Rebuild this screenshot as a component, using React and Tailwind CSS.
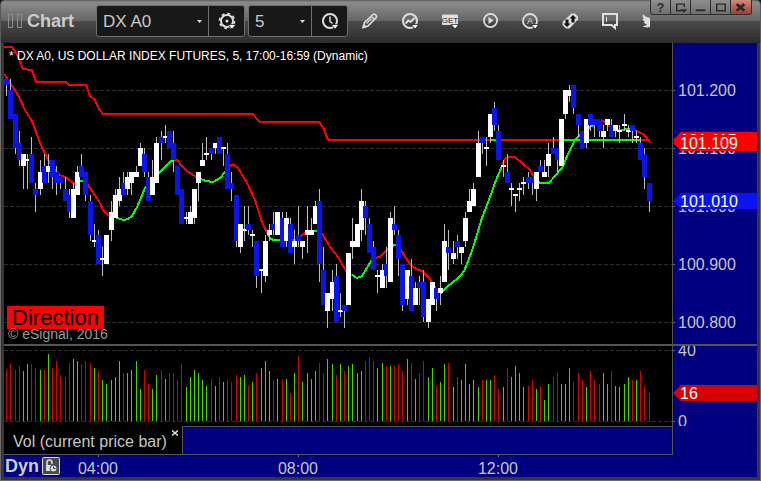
import { FaTwitter } from "react-icons/fa";

// one row per 5 minute bar: open, high, low, close in ticks over 100.800
const bars = [
  [42, 42, 39, 41], [40, 42, 35, 35], [36, 36, 29, 30], [31, 33, 27, 28], [27, 29, 23, 29],
  [28, 29, 23, 28], [29, 32, 24, 24], [23, 24, 19, 22], [23, 28, 22, 26], [27, 29, 24, 24],
  [26, 29, 24, 27], [28, 28, 23, 25], [26, 27, 22, 24], [25, 25, 23, 24], [23, 25, 21, 21],
  [22, 23, 18, 19], [18, 24, 18, 23], [22, 27, 22, 26], [27, 29, 25, 25], [26, 26, 21, 22],
  [21, 22, 14, 15], [14, 17, 13, 14], [15, 16, 10, 10], [11, 13, 8, 11], [10, 15, 10, 15],
  [16, 21, 14, 19], [18, 23, 18, 22], [21, 25, 20, 23], [24, 26, 22, 22], [23, 26, 22, 25],
  [24, 26, 22, 26], [25, 27, 25, 26], [27, 31, 27, 30], [29, 30, 25, 26], [25, 26, 21, 21],
  [22, 28, 22, 25], [24, 32, 24, 31], [32, 33, 28, 31], [32, 34, 31, 32], [33, 33, 30, 30],
  [31, 33, 26, 28], [27, 27, 22, 22], [23, 23, 17, 17], [18, 19, 17, 18], [17, 20, 17, 19],
  [18, 23, 17, 23], [24, 26, 21, 26], [27, 31, 27, 28], [29, 32, 28, 29], [30, 30, 28, 29],
  [30, 31, 29, 31], [32, 32, 29, 29], [30, 30, 27, 30], [29, 31, 23, 23], [24, 26, 21, 23],
  [22, 22, 13, 14], [13, 17, 12, 17], [16, 20, 14, 16], [17, 20, 15, 16], [15, 16, 13, 15],
  [14, 14, 6, 8], [9, 9, 5, 9], [8, 15, 7, 14], [15, 17, 14, 16], [17, 19, 15, 16],
  [15, 19, 15, 19], [18, 19, 13, 13], [14, 19, 13, 18], [17, 18, 12, 12], [13, 16, 10, 14],
  [15, 20, 13, 14], [13, 14, 11, 14], [15, 20, 12, 16], [15, 18, 15, 16], [17, 21, 17, 20],
  [21, 23, 7, 10], [9, 13, 3, 3], [2, 5, -1, 5], [4, 9, 2, 7], [8, 10, 0, 0],
  [2, 5, 1, 2], [3, 3, -1, 2], [3, 12, 3, 12], [13, 18, 11, 14], [13, 17, 13, 17],
  [16, 23, 14, 21], [20, 21, 15, 18], [17, 18, 12, 12], [13, 14, 9, 9], [8, 9, 5, 8],
  [6, 10, 6, 9], [10, 13, 6, 8], [7, 19, 7, 18], [17, 20, 15, 16], [15, 16, 8, 11],
  [10, 10, 2, 3], [4, 9, 3, 9], [8, 11, 2, 2], [3, 7, 3, 6], [7, 8, 3, 6],
  [7, 9, 0, 1], [0, 4, -1, 4], [3, 7, 3, 7], [6, 6, 2, 4], [5, 8, 3, 6],
  [7, 17, 7, 14], [13, 16, 9, 12], [11, 14, 10, 12], [14, 15, 11, 13], [12, 13, 10, 13],
  [14, 19, 13, 18], [19, 23, 19, 21], [20, 24, 20, 23], [25, 33, 25, 31], [32, 32, 29, 31],
  [30, 32, 27, 30], [32, 36, 31, 36], [37, 38, 33, 34], [33, 34, 28, 28], [27, 28, 25, 27],
  [26, 29, 24, 24], [23, 24, 20, 23], [22, 22, 19, 22], [23, 24, 21, 23], [24, 25, 22, 24],
  [25, 26, 23, 24], [25, 25, 22, 24], [23, 26, 21, 26], [27, 28, 26, 26], [25, 28, 25, 26],
  [27, 31, 25, 29], [30, 32, 29, 29], [30, 30, 26, 28], [27, 35, 27, 35], [36, 40, 35, 40],
  [39, 41, 38, 40], [41, 41, 36, 37], [36, 36, 32, 34], [33, 33, 30, 30], [31, 35, 30, 35],
  [36, 36, 33, 34], [35, 35, 32, 34], [35, 35, 32, 33], [32, 34, 30, 33], [34, 35, 33, 35],
  [34, 35, 32, 32], [33, 34, 32, 34], [33, 34, 31, 33], [34, 36, 33, 34], [33, 34, 32, 33],
  [34, 34, 31, 33], [32, 33, 31, 32], [31, 32, 28, 28], [29, 30, 23, 25], [24, 24, 19, 21],
];

// r = down volume, g = up volume
const volumes =
  "r29 r32 r29 r31 g28 g32 r32 r30 g29 r29 g38 r30 r34 r26 r25 r33 g35 g34 r32 r34 " +
  "r33 g30 r29 g23 g21 g23 g25 g34 r27 g27 g29 g34 g18 r29 r21 g18 g26 r29 g24 r27 " +
  "r27 r23 r32 g19 g25 g29 g27 g23 g20 r24 g20 r25 g22 r23 r22 r26 g25 g26 r20 g22 " +
  "r27 g30 g34 g28 r23 g24 r24 g24 r16 g27 r37 g22 g27 g24 g28 r33 r27 g35 g32 r26 " +
  "g32 r28 g31 g32 g27 g28 r34 r36 r34 g30 g33 r31 g31 r31 r32 r28 g35 r33 g24 r27 " +
  "r34 g25 g30 r20 g22 g32 r33 g19 r25 g23 g32 g21 g23 g19 r23 g23 g23 r26 r18 g19 " +
  "r30 g25 g31 g27 g19 r20 r23 g18 r20 g12 g21 r25 r27 g21 g21 g30 r22 r27 r23 g19 " +
  "r28 r23 r21 g27 g21 r28 g20 g19 g21 g25 r23 g23 r28 r20 r16";

const RED = "#ff0000";
const GREEN = "#00ff00";

const bands = [
  [RED, "4,47 12,47 16,53 20,61 23,69 32,70 36,82 66,82 69,85 86,85 90,96 95,100 99,109 103,114 253,114 257,119 260,122 319,122 324,129 327,138 329,140 490,140"],
  [GREEN, "490,140 500,140"],
  [RED, "500,140 563,140"],
  [GREEN, "563,140 641,140"],
  [RED, "641,140 650,140"],
];

const average = [
  [RED, "4,74 9,81 18,95 25,110 32,121 36,132 40,143 48,160 56,171 60,175 67,178 74,184 76,182"],
  [GREEN, "76,182 83,181"],
  [RED, "83,181 87,184 95,195 100,203 103,210 108,215 115,217"],
  [GREEN, "115,217 120,219 124,220 128,219 132,216 137,207 140,200 145,188 152,180 159,173 165,167 170,162 173,160"],
  [RED, "173,160 177,160 182,166 187,171 195,176 198,178"],
  [GREEN, "198,178 206,181 213,182 220,178 225,172 228,169"],
  [RED, "228,169 231,165 234,165 238,168 247,183 255,200 262,222 268,235"],
  [GREEN, "268,235 271,239 274,240 295,240"],
  [RED, "295,240 300,237 305,233 308,232"],
  [GREEN, "308,232 313,231 318,231"],
  [RED, "318,231 323,235 330,247 336,254 342,264 347,272 352,275"],
  [GREEN, "352,275 357,278 362,276 367,268 371,261 374,258"],
  [RED, "374,258 380,257 387,250 391,247"],
  [GREEN, "391,247 394,245 398,246"],
  [RED, "398,246 402,252 410,264 416,269 422,271 428,277 433,283 436,290"],
  [GREEN, "436,290 441,293 448,286 457,279 462,274 465,269 473,248 482,218 490,197 496,180 502,166"],
  [RED, "502,166 505,159 508,157 515,157 523,164 530,170 534,177 538,182"],
  [GREEN, "538,182 541,183 549,183 562,168 568,154 575,140 582,133 590,127 596,124"],
  [RED, "596,124 599,121 603,121 607,123 612,130 622,130"],
  [GREEN, "622,130 626,129 631,129"],
  [RED, "631,129 635,130 643,134 647,138 650,143"],
];

const barX = (i) => Math.floor(2.73 + i * 4.171);
const priceY = (v) => Math.ceil(279 - v * 5.8 - 0.01);

const priceLabels = [
  ["101.200", 47],
  ["101.100", 105],
  ["101.000", 163],
  ["100.900", 221],
  ["100.800", 279],
];

function Candle({ x, bar }) {
  const [open, high, low, close] = bar;
  const top = priceY(Math.max(open, close));
  const bottom = priceY(Math.min(open, close));
  const flat = open === close;
  return (
    <g>
      <rect x={x} y={priceY(high)} width="1" height={Math.max(priceY(low) - priceY(high), 1)} fill="#bdbdbd" />
      <rect
        x={x - 2}
        y={flat ? top - 1 : top}
        width="5"
        height={flat ? 2 : bottom - top}
        fill={close < open ? "#0a14f0" : "#ffffff"}
      />
    </g>
  );
}

function GridLine({ y }) {
  return <line x1="0" x2="100%" y1={y + 0.5} y2={y + 0.5} stroke="#2e2e2e" strokeDasharray="4 2" />;
}

function AxisTag({ y, color, children }) {
  return (
    <g>
      <path d={`M0 ${y} l8 -8 h100 v16 h-100 z`} fill={color} />
      <text x="7" y={y + 6} fill="#ffffff">
        {children}
      </text>
    </g>
  );
}

function PricePlot() {
  return (
    <svg className="block h-full w-full" shapeRendering="crispEdges" role="img" aria-label="Price">
      {priceLabels.map(([label, y]) => (
        <GridLine key={label} y={y} />
      ))}
      <g transform="translate(-4 -43)" fill="none" strokeWidth="2">
        {[...bands, ...average].map(([color, points]) => (
          <polyline key={points} points={points} stroke={color} />
        ))}
      </g>
      {bars.map((bar, i) => (
        <Candle key={i} x={barX(i)} bar={bar} />
      ))}
    </svg>
  );
}

function VolumePlot() {
  return (
    <svg className="block h-full w-full" shapeRendering="crispEdges" role="img" aria-label="Volume">
      <GridLine y={4} />
      <GridLine y={75} />
      {volumes.split(" ").map((v, i) => {
        const h = Math.round(Number(v.slice(1)) * 1.77);
        return (
          <rect key={i} x={barX(i)} y={75 - h} width="1" height={h} fill={v[0] === "r" ? "#d80000" : "#40d800"} />
        );
      })}
    </svg>
  );
}

function Axis({ labels, children }) {
  return (
    <svg className="block h-full w-full text-[16px]" fill="#c6c6c6">
      {labels.map(([label, y]) => (
        <g key={label}>
          <rect x="0" y={y} width="2" height="1" fill="#666666" />
          <text x="5" y={y + 6}>
            {label}
          </text>
        </g>
      ))}
      {children}
    </svg>
  );
}

function Icon({ menu, children }) {
  return (
    <svg width="18" height="18" viewBox="0 0 18 18" fill="none" stroke="#dedede" strokeWidth="2">
      {children}
      {menu && (
        <path d="M11 13h6l-3 3.500z" fill="#ffffff" stroke="#2c2c2c" strokeWidth="1.500" paintOrder="stroke" />
      )}
    </svg>
  );
}

const tools = [
  {
    label: "Draw",
    icon: (
      <Icon>
        <path d="M2 15.500l1.500-5L12 2.500q1-1 2.200 0l.9.9q1 1.100 0 2.200L7 14z" strokeWidth="1.600" />
        <path d="M10.500 4.500l3 3M5.500 11.500l5-5" strokeWidth="1.200" />
        <path d="M2 15.700l1-3.200 2.400 2.200z" fill="#dedede" strokeWidth="1" />
      </Icon>
    ),
  },
  {
    label: "Studies",
    icon: (
      <Icon menu>
        <circle cx="9" cy="9" r="7" />
        <path d="M4.500 11.500l2.800-3 2.400 1.200L13.500 6" />
      </Icon>
    ),
  },
  {
    label: "Get",
    icon: (
      <Icon menu>
        <rect x="1" y="2.500" width="16" height="10.500" rx="1" fill="#dedede" stroke="none" />
        <text x="9" y="11" textAnchor="middle" fill="#222222" stroke="none" className="text-[8px]">
          GET
        </text>
      </Icon>
    ),
  },
  {
    label: "Play",
    icon: (
      <Icon>
        <circle cx="9.500" cy="8.500" r="6.600" strokeWidth="1.800" />
        <path d="M7.500 5v7l5-3.500z" fill="#dedede" stroke="none" />
      </Icon>
    ),
  },
  {
    label: "Alerts",
    icon: (
      <Icon menu>
        <circle cx="9" cy="9" r="7" strokeWidth="1.800" />
        <text x="9" y="12" textAnchor="middle" fill="#dedede" stroke="none" className="text-[9px]">
          A
        </text>
      </Icon>
    ),
  },
  {
    label: "Trade",
    icon: (
      <Icon>
        <path d="M10.500 1.500h3.500l3 3V7.500l-8.500 9H5L1.500 13V10z" fill="#dedede" stroke="none" />
        <path d="M12 3l3.500 3.500h-2V10.500h-3V6.500h-2zM6 15l-3.500-3.500h2V7.500h3v4h2z" fill="#111111" stroke="none" />
      </Icon>
    ),
  },
  {
    label: "Notes",
    icon: (
      <Icon>
        <path d="M2 2h14v11h-2v3l-3.500-3H2z" />
        <path d="M5.500 5v5" strokeWidth="1" />
      </Icon>
    ),
  },
  { label: "Tweet", icon: <FaTwitter className="text-[17px] text-[#dedede]" /> },
];

const windowButtons = [
  { label: "Help", icon: <text x="10" y="12" textAnchor="middle" className="text-[13px] font-bold" fill="#2a2a2a" stroke="none">?</text> },
  { label: "Dock", icon: <path d="M14 7V4H6v7h5M11.500 10h4l-2 2z" strokeWidth="1.500" /> },
  { label: "Minimize", icon: <path d="M5 10.500h10" /> },
  { label: "Maximize", icon: <path d="M6 4h9v7H6z" strokeWidth="1.500" /> },
  { label: "Close", icon: <path d="M6 4l8 7M14 4l-8 7" strokeWidth="3" /> },
];

function Picker({ label, value, selectClass, buttonLabel, children }) {
  return (
    <div className="flex h-8 shrink-0 overflow-hidden rounded-[3px] border border-[#6e6e6e] bg-[#181818]">
      <label className="relative flex">
        <select
          aria-label={label}
          defaultValue={value}
          className={`appearance-none bg-transparent pt-0.5 pl-1.5 text-[17px] text-[#c8c8c8] outline-none ${selectClass}`}
        >
          <option>{value}</option>
        </select>
        <svg className="pointer-events-none absolute top-3.5 right-1.5" width="5" height="3" viewBox="0 0 5 3">
          <path d="M0 0h5L2.500 3z" fill="#dddddd" />
        </svg>
      </label>
      <button aria-label={buttonLabel} className="flex w-9 items-center justify-center border-l border-[#6e6e6e]">
        {children}
      </button>
    </div>
  );
}

function Header() {
  return (
    <header className="flex h-[43px] rounded-t-[5px] border-x border-[#5a5a5a] bg-[linear-gradient(#5a5a5a_0px,#8c8c8c_2px,#656565_21px,#4a4a4a_21px,#2c2c2c_43px)]">
      <div className="flex h-[42px] w-[95px] shrink-0 items-center pl-[7px]">
        <div className="flex gap-1">
          <span className="h-3.5 w-[5px] border border-[#8f8f8f]" />
          <span className="h-3.5 w-[5px] border border-[#8f8f8f]" />
        </div>
        <h1 className="pl-[5px] text-[18px] font-bold text-[#cccccc]">Chart</h1>
      </div>

      <div className="flex shrink-0 gap-[3px] pt-[5px]">
        <Picker label="Symbol" value="DX A0" selectClass="w-[111px]" buttonLabel="Chart settings">
          <Icon menu>
            <circle cx="9" cy="9" r="6" />
            <circle cx="9" cy="9" r="7.500" strokeWidth="1.600" strokeDasharray="3 2.890" />
            <circle cx="9" cy="9" r="1.500" fill="#dedede" stroke="none" />
          </Icon>
        </Picker>
        <Picker label="Interval" value="5" selectClass="w-[62px]" buttonLabel="Time template">
          <Icon menu>
            <circle cx="9" cy="9" r="7" />
            <path d="M9 4.500v5l2.500 2" strokeWidth="1.500" />
          </Icon>
        </Picker>
      </div>

      <nav className="flex h-[41px] min-w-0 flex-1 overflow-hidden pl-0.5">
        {tools.map((tool) => (
          <button key={tool.label} aria-label={tool.label} className="flex w-10 shrink-0 items-center justify-center">
            {tool.icon}
          </button>
        ))}
      </nav>

      <div className="mr-2 flex h-[15px] shrink-0 overflow-hidden rounded-b-[3px] border border-t-0 border-[#2e2e2e] bg-[linear-gradient(#8e8e8e,#707070)]">
        {windowButtons.map((b) => (
          <button
            key={b.label}
            aria-label={b.label}
            className={
              b.label === "Close"
                ? "w-5 bg-[linear-gradient(#d08a7c,#a33c2c)]"
                : "w-5 border-r border-[#2e2e2e]"
            }
          >
            <svg width="19" height="14" viewBox="0 0 20 14" fill="none" stroke="#2a2a2a" strokeWidth="2">
              {b.icon}
            </svg>
          </button>
        ))}
      </div>
    </header>
  );
}

export default function App() {
  return (
    <div className="bg-[#1c1c1c] font-['Liberation_Sans',Arial,sans-serif]">
      <Header />

      <div className="border-x border-b border-[#6a6a6a]">
        <main className="border-x-3 border-b-3 border-[#373737] bg-[#000080]">
          <section className="flex h-[301px]">
            <div className="relative min-w-0 flex-1 bg-black">
              <PricePlot />
              <p className="absolute top-1.5 left-[5px] text-[12px] leading-[14px] text-white">
                * DX A0, US DOLLAR INDEX FUTURES, 5, 17:00-16:59 (Dynamic)
              </p>
              <div className="absolute bottom-1 left-[3px]">
                <p className="h-[23px] w-[97px] bg-[#ff0000] text-center text-[22px] leading-6 text-black">
                  Direction
                </p>
                <p className="pl-px text-[14px] leading-[11px] text-[#999999]">© eSignal, 2016</p>
              </div>
            </div>
            <div className="w-[85px] border-l border-[#555555]">
              <Axis labels={priceLabels}>
                <AxisTag y={97} color="#ff0000">101.115</AxisTag>
                <AxisTag y={100} color="#ff0000">101.109</AxisTag>
                <AxisTag y={158} color="#0a14f0">101.010</AxisTag>
              </Axis>
            </div>
          </section>

          <section className="flex h-[82px] border-t-2 border-[#555555]">
            <div className="min-w-0 flex-1 bg-black">
              <VolumePlot />
            </div>
            <div className="w-[85px] border-l border-[#555555]">
              <Axis labels={[["40", 4], ["0", 75]]}>
                <AxisTag y={47} color="#d80000">16</AxisTag>
              </Axis>
            </div>
          </section>

          <div className="flex h-[29px]">
            <div className="flex min-w-0 flex-1 border-b border-[#555555]">
              <div className="flex w-[178px] justify-between bg-black pr-1 pl-[9px]">
                <span className="pt-[7px] text-[16px] leading-[18px] whitespace-nowrap text-[#c6c6c6]">
                  Vol (current price bar)
                </span>
                <button aria-label="Close study" className="h-3 pt-0.5">
                  <svg width="6" height="6" viewBox="0 0 6 6" stroke="#dddddd" strokeWidth="1.500">
                    <path d="M0 0.500l6 5M6 0.500l-6 5" />
                  </svg>
                </button>
              </div>
              <div className="flex-1 border-t border-l border-[#555555]" />
            </div>
            <div className="w-[85px] border-l border-[#555555]" />
          </div>

          <footer className="relative h-[22px]">
            <svg className="block h-full w-full text-[16px]" fill="#c6c6c6">
              {["04:00", "08:00", "12:00"].map((time, i) => (
                <g key={time}>
                  <rect x={94 + i * 200} y="0" width="1" height="2" fill="#777777" />
                  <text x={94 + i * 200} y="19" textAnchor="middle">
                    {time}
                  </text>
                </g>
              ))}
            </svg>
            <div className="absolute top-0.5 left-px flex items-center gap-[3px]">
              <span className="text-[18px] leading-[18px] font-bold text-[#cccccc]">Dyn</span>
              <button aria-label="Lock time axis">
                <svg width="18" height="18" viewBox="0 0 18 18" fill="none" stroke="#dedede">
                  <rect x="0.500" y="0.500" width="17" height="17" rx="1" fill="#4a4a4a" />
                  <path d="M5 8V5.500a2.500 2.500 0 015 0V7" strokeWidth="1.500" />
                  <rect x="4" y="8" width="7" height="6" fill="#dedede" stroke="none" />
                  <circle cx="11.500" cy="11.500" r="3.500" fill="#dedede" stroke="#4a4a4a" />
                  <path d="M11.500 9.500v2h2" stroke="#333333" />
                </svg>
              </button>
            </div>
          </footer>
        </main>
      </div>
    </div>
  );
}
